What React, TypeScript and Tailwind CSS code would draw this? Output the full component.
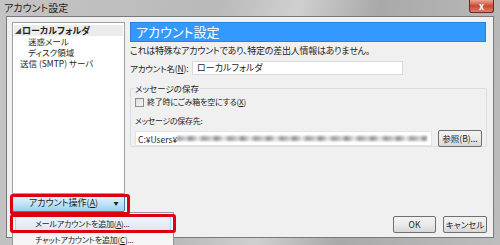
const Btn = ({ label, w }: { label: string; w: string }) => (
  <div
    className={`${w} h-[17px] flex items-center justify-center whitespace-nowrap rounded-[2px] border border-[#707070] bg-gradient-to-b from-[#f2f2f2] via-[#ebebeb] to-[#d6d6d6] text-[8.5px] text-[#1e1e1e]`}
  >
    {label}
  </div>
);

export default function App() {
  return (
    <div className="w-[500px] h-[245px] relative overflow-hidden whitespace-nowrap font-['Noto_Sans_CJK_JP',sans-serif] [font-feature-settings:'palt'] text-[#1e1e1e] bg-[linear-gradient(100deg,#c4c4c4_0%,#b9b9b9_40%,#d0d0d0_55%,#a9a9a9_70%,#bdbdbd_100%)]">
      {/* title bar */}
      <div className="h-[16px] flex items-start justify-between pl-[4px] pr-[6px]">
        <span className="text-[10px] leading-[16px] text-[#202020]">アカウント設定</span>
        <div className="w-[25px] h-[13px] flex items-center justify-center rounded-b-[3px] border border-t-0 border-[#6b2a22] bg-gradient-to-b from-[#e8a493] via-[#c9452c] to-[#d7836d] text-white text-[9px] font-bold leading-none">
          x
        </div>
      </div>

      {/* client area */}
      <div className="mx-[6px] h-[222px] border border-[#7a7a7a] bg-[#f0f0f0] flex flex-col px-[5px] pt-[5px]">
        <div className="flex gap-[5px] h-[190px]">
          {/* left column */}
          <div className="w-[115px] flex flex-col">
            <div className="flex-1 bg-white border border-[#a0a0a0] pt-[2px] px-[1px] text-[8.5px]">
              <div className="flex items-center h-[11px] bg-[#ececec] pl-[1px]">
                <span className="text-[6px] leading-none text-[#404040] mr-[1px]">◢</span>
                <span className="font-bold text-[9px] leading-[11px]">ローカルフォルダ</span>
              </div>
              <div className="h-[11px] leading-[11px] pl-[14px]">迷惑メール</div>
              <div className="h-[11px] leading-[11px] pl-[14px]">ディスク領域</div>
              <div className="h-[11px] leading-[11px] pl-[6px]">送信 (SMTP) サーバ</div>
            </div>
            <div className="h-[18px] flex items-center rounded-[2px] border border-[#3c7fb1] bg-gradient-to-b from-[#e6f5fd] via-[#c4e5f7] to-[#98d0ef] text-[9px]">
              <span className="flex-1 text-center pl-[6px]">アカウント操作(<span className="underline">A</span>)</span>
              <span className="w-[16px] text-center text-[5px]">▼</span>
            </div>
          </div>

          {/* right column */}
          <div className="flex-1 flex flex-col pr-[1px]">
            <div className="h-[20px] bg-[#3399ff] border border-[#2f7fd6] text-white text-[13px] leading-[18px] pl-[5px] mr-[1px]">
              アカウント設定
            </div>
            <div className="text-[9px] tracking-[-0.25px] leading-[12px] mt-[3px]">これは特殊なアカウントであり、特定の差出人情報はありません。</div>
            <div className="flex items-center mt-[4px] text-[8.5px]">
              <span className="w-[62px] tracking-[-0.2px]">アカウント名(<span className="underline">N</span>):</span>
              <div className="w-[211px] h-[14px] bg-white border border-[#d8d8d8] pl-[4px] leading-[12px] text-[9px]">ローカルフォルダ</div>
            </div>

            {/* group */}
            <div className="relative mt-[13px] h-[59px] border border-[#d5dfe5] rounded-[2px] px-[4px] pt-[7px] text-[8px]">
              <span className="absolute -top-[7px] left-[3px] bg-[#f0f0f0] px-[1px] leading-[12px] text-[8.5px]">メッセージの保存</span>
              <div className="flex items-center gap-[3px] leading-[12px]">
                <div className="w-[9px] h-[9px] border border-[#8e8f8f] bg-gradient-to-br from-[#dcdcdc] to-[#f8f8f8]" />
                <span className="tracking-[-0.2px]">終了時にごみ箱を空にする(<span className="underline">X</span>)</span>
              </div>
              <div className="mt-[7px] leading-[12px] tracking-[-0.3px]">メッセージの保存先:</div>
              <div className="flex items-center mt-[3px] gap-[6px]">
                <div className="w-[297px] h-[15px] bg-white border border-[#e3e3e3] flex items-center pl-[2px] overflow-hidden">
                  <span className="leading-[12px] text-[8.5px]">C:¥Users¥</span>
                  <div className="flex-1 h-[5px] mr-[4px] blur-[1px] bg-[repeating-linear-gradient(90deg,#9a9a9a_0px,#b8b8b8_5px,#d8d8d8_9px,#8d8d94_13px,#c2c2c2_18px,#eeeeee_21px,#a3a3a3_26px)]" />
                </div>
                <Btn label="参照(B)..." w="w-[44px]" />
              </div>
            </div>
          </div>
        </div>

        {/* bottom buttons */}
        <div className="flex justify-end gap-[7px] mt-[4px] pr-[1px]">
          <Btn label="OK" w="w-[43px]" />
          <Btn label="キャンセル" w="w-[44px]" />
        </div>
      </div>

      {/* dropdown menu */}
      <div className="absolute left-[12px] top-[212px] w-[162px] h-[40px] bg-[#f5f5f5] border border-[#979797] pt-[3px] px-[2px] text-[8px] tracking-[-0.2px]">
        <div className="h-[15px] flex items-center pl-[19px] rounded-[2px] border border-[#a8d8f7] bg-gradient-to-b from-[#f0f5fb] to-[#dde7f4]">
          メールアカウントを追加(<span className="underline">A</span>)...
        </div>
        <div className="h-[15px] flex items-center pl-[20px] mt-[1px]">
          チャットアカウントを追加(<span className="underline">C</span>)...
        </div>
      </div>

      {/* red highlights */}
      <div className="absolute left-[10px] top-[194px] w-[120px] h-[21px] border-[3px] border-[#dd0011] rounded-[3px]" />
      <div className="absolute left-[10px] top-[214px] w-[166px] h-[19px] border-[3px] border-[#dd0011] rounded-[3px]" />
    </div>
  );
}
